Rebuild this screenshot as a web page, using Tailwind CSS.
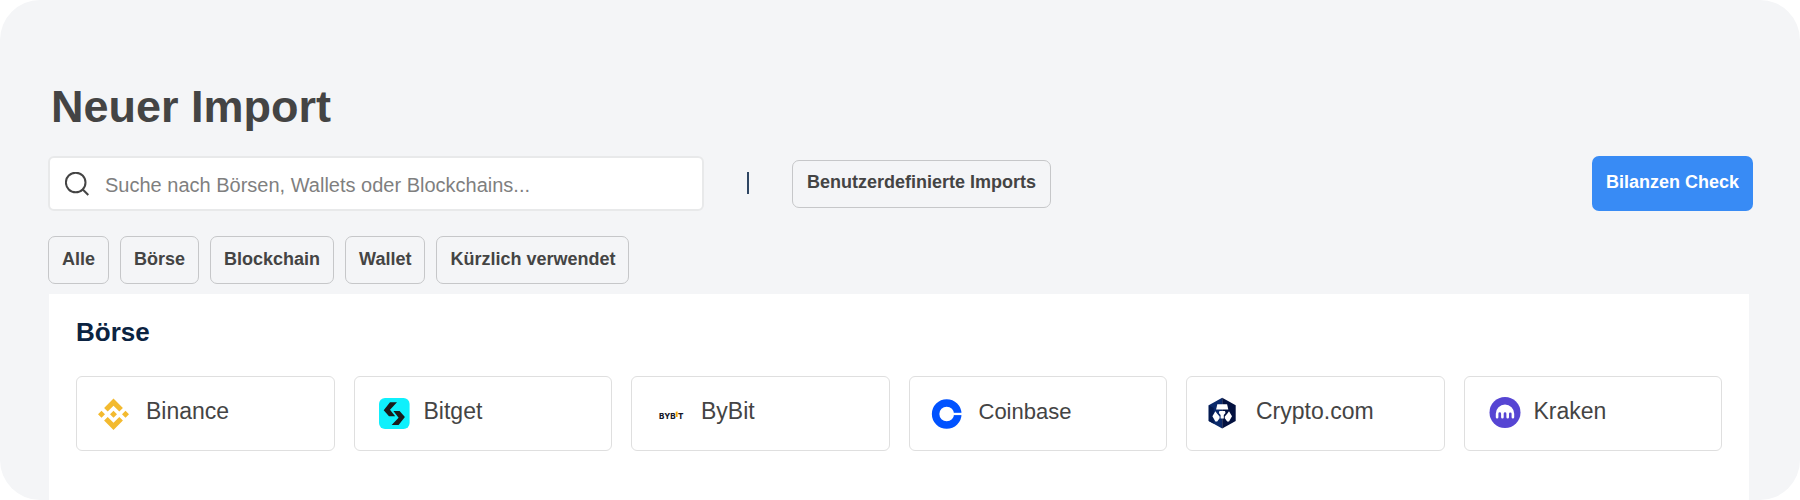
<!DOCTYPE html>
<html lang="de">
<head>
    <meta charset="UTF-8">
    <meta name="viewport" content="width=device-width, initial-scale=1.0">
    <title>Neuer Import</title>
    <script src="https://cdn.jsdelivr.net/npm/@tailwindcss/browser@4"></script>
</head>
<body class="bg-white font-['Liberation_Sans',Arial,sans-serif] text-[#444]">
    <div class="flex min-h-screen flex-col rounded-[40px] bg-[#f4f5f7] pt-[79px] pr-[47px] pl-12">
        <h1 class="pl-[3px] text-[45px] leading-[56px] font-bold">Neuer Import</h1>

        <!-- Search and actions -->
        <div class="mt-[21px] flex flex-wrap items-center gap-[43px]">
            <label class="flex h-[55px] w-full max-w-[656px] items-center gap-4 rounded-md border-2 border-[#e8e9ea] bg-white px-[15px]">
                <svg class="size-6 shrink-0" viewBox="0 0 24 24" fill="none" stroke="#444" stroke-width="2" aria-hidden="true">
                    <circle cx="10.7" cy="10.5" r="9.8"/>
                    <path d="M17.5 17.3 23.3 23"/>
                </svg>
                <input type="search" aria-label="Suche" placeholder="Suche nach Börsen, Wallets oder Blockchains..." class="w-full pt-0.5 text-[20px] outline-none placeholder:text-[#7f7f7f]">
            </label>
            <div class="mb-0.5 h-[22px] w-0.5 bg-[#2f4663]"></div>
            <button type="button" class="h-12 rounded-[7px] border border-[#c6c7c9] px-[14px] pb-0.5 text-[18px] font-bold">Benutzerdefinierte Imports</button>
            <button type="button" class="ml-auto h-[55px] rounded-[7px] bg-[#388bf5] px-[14px] pb-0.5 text-[18px] font-bold text-white">Bilanzen Check</button>
        </div>

        <!-- Filters -->
        <div class="mt-[25px] flex flex-wrap gap-[11px]">
            <button type="button" class="h-12 rounded-[7px] border border-[#c6c7c9] px-[13px] pb-0.5 text-[18px] font-bold">Alle</button>
            <button type="button" class="h-12 rounded-[7px] border border-[#c6c7c9] px-[13px] pb-0.5 text-[18px] font-bold">Börse</button>
            <button type="button" class="h-12 rounded-[7px] border border-[#c6c7c9] px-[13px] pb-0.5 text-[18px] font-bold">Blockchain</button>
            <button type="button" class="h-12 rounded-[7px] border border-[#c6c7c9] px-[13px] pb-0.5 text-[18px] font-bold">Wallet</button>
            <button type="button" class="h-12 rounded-[7px] border border-[#c6c7c9] px-[13px] pb-0.5 text-[18px] font-bold">Kürzlich verwendet</button>
        </div>

        <!-- Exchanges -->
        <section class="mt-2.5 mr-1 ml-px flex-1 bg-white px-[27px] pt-[22px]">
            <h2 class="text-[26px] leading-8 font-bold text-[#0b2341]">Börse</h2>
            <div class="mt-7 grid grid-cols-2 gap-[19px] lg:grid-cols-6">
                <a href="#binance" class="flex h-[75px] items-center gap-3 rounded-md border border-[#dfdfdf] pl-[21px]">
                    <svg class="size-9 shrink-0" viewBox="0 0 36 36" fill="#f3ba2f" aria-hidden="true">
                        <path d="M15.5 2.5 24.9 12l-3.6 3.6-5.8-5.8-5.8 5.8L6.1 12z"/>
                        <path d="M15.5 34.1 24.9 24.6l-3.6-3.6-5.8 5.8L9.7 21l-3.6 3.6z"/>
                        <path d="M3.5 14.8 7 18.3l-3.5 3.5L0 18.3zM15.5 14.8l3.5 3.5-3.5 3.5-3.5-3.5zM27.5 14.8l3.5 3.5-3.5 3.5-3.5-3.5z"/>
                    </svg>
                    <span class="pb-[5px] text-[23px]">Binance</span>
                </a>
                <a href="#bitget" class="flex h-[75px] items-center gap-3 rounded-md border border-[#dfdfdf] pl-[21px]">
                    <svg class="size-9 shrink-0" viewBox="0 0 36 36" aria-hidden="true">
                        <rect x="3" y="2" width="30.6" height="31" rx="6" fill="#0ff0fc"/>
                        <path d="M14 6.3h7L14 13.7l5.2 6.6H13L7.7 14.3z" fill="#1b1b1b"/>
                        <path d="M22.6 29.1h-7l7-7.4-5.2-6.6h6.2l5.3 6z" fill="#1b1b1b"/>
                    </svg>
                    <span class="pb-[5px] text-[23px]">Bitget</span>
                </a>
                <a href="#bybit" class="flex h-[75px] items-center gap-3 rounded-md border border-[#dfdfdf] pl-[21px]">
                    <svg class="size-9 shrink-0 font-['Inter',sans-serif]" viewBox="0 0 36 36" font-size="8" font-weight="800" aria-hidden="true">
                        <text x="6" y="23" fill="#15192a">BYB</text>
                        <path d="M22.7 15.8 24.6 15.4v5.7h-1.9z" fill="#f7a600"/>
                        <text x="25" y="23" fill="#15192a">T</text>
                    </svg>
                    <span class="pb-[5px] text-[23px]">ByBit</span>
                </a>
                <a href="#coinbase" class="flex h-[75px] items-center gap-3 rounded-md border border-[#dfdfdf] pl-[21px]">
                    <svg class="size-9 shrink-0" viewBox="0 0 36 36" aria-hidden="true">
                        <circle cx="15.7" cy="18" r="11.1" fill="none" stroke="#0052ff" stroke-width="7.5"/>
                        <path d="M22 16.8h9v2.3h-9z" fill="#fff"/>
                    </svg>
                    <span class="pb-[5px] text-[22px]">Coinbase</span>
                </a>
                <a href="#crypto-com" class="flex h-[75px] items-center gap-3 rounded-md border border-[#dfdfdf] pl-[21px]">
                    <svg class="size-9 shrink-0" viewBox="0 0 36 36" aria-hidden="true">
                        <path d="M14.2 1.7v30.8L.7 24.9V9.3z" fill="#0b2a6b"/>
                        <path d="M14.2 1.7v30.8l13.5-7.6V9.3z" fill="#03113f"/>
                        <path d="M.7 9.3v15.6l5 2.8V12z" fill="#031a50"/>
                        <path d="M9.3 8.3h9.8l1.2 5.3H8.1z" fill="#fff"/>
                        <path d="M11.4 15h5.6l.5 2-1.7 2v3.6h-3.2V19l-1.7-2z" fill="#fff"/>
                        <path d="M7.4 15.2 4.4 20.2l3 5.2h1.8l2.4-3.2v-1.8L9.2 17.8zM21 15.2l3 5-3 5.2h-1.8l-2.4-3.2v-1.8l2.4-2.6z" fill="#fff"/>
                    </svg>
                    <span class="pb-[5px] text-[23px]">Crypto.com</span>
                </a>
                <a href="#kraken" class="flex h-[75px] items-center gap-3 rounded-md border border-[#dfdfdf] pl-[21px]">
                    <svg class="size-9 shrink-0" viewBox="0 0 36 36" aria-hidden="true">
                        <circle cx="19" cy="16.5" r="15.5" fill="#5645d3"/>
                        <path d="M9.8 17.7a9.2 9.2 0 0 1 18.4 0v3.5a1.3 1.3 0 0 1-2.6 0v-3.5a1.3 1.3 0 0 0-2.6 0v3.5a1.3 1.3 0 0 1-2.6 0v-3.5a1.3 1.3 0 0 0-2.7 0v3.5a1.3 1.3 0 0 1-2.6 0v-3.5a1.3 1.3 0 0 0-2.7 0v3.5a1.3 1.3 0 0 1-2.6 0z" fill="#fff"/>
                    </svg>
                    <span class="pb-[5px] text-[23px]">Kraken</span>
                </a>
            </div>
        </section>
    </div>
</body>
</html>
